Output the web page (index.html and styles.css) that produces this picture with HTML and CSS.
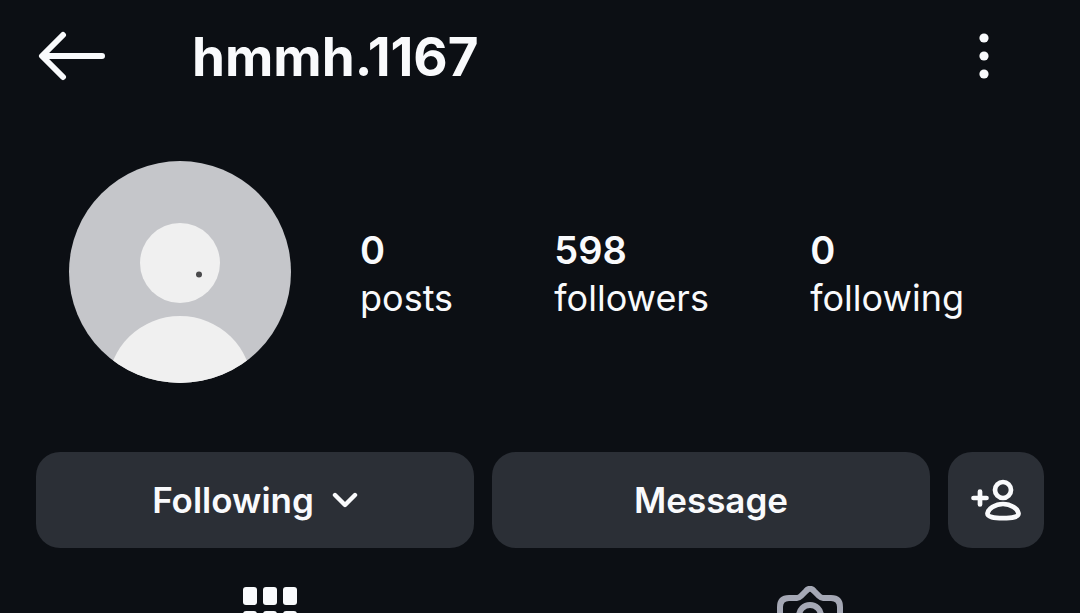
FILE: index.html
```html
<!DOCTYPE html>
<html lang="en">
<head>
<meta charset="utf-8">
<meta name="viewport" content="width=device-width, initial-scale=1">
<title>hmmh.1167</title>
<link rel="stylesheet" href="styles.css">
</head>
<body>
<header class="topbar">
  <button class="icon-button" type="button" aria-label="Back">
    <svg width="68" height="52" viewBox="0 0 68 52" fill="none" stroke="currentColor" stroke-width="6" stroke-linecap="round" stroke-linejoin="round"><path d="M25 5 4 26l21 21M5 26h59"/></svg>
  </button>
  <h1 class="username">hmmh.1167</h1>
  <button class="icon-button" type="button" aria-label="More options">
    <svg width="12" height="48" viewBox="0 0 12 48" fill="currentColor"><circle cx="6" cy="6" r="4.6"/><circle cx="6" cy="24" r="4.6"/><circle cx="6" cy="42" r="4.6"/></svg>
  </button>
</header>
<main>
  <section class="profile">
    <svg class="avatar" viewBox="0 0 222 222" role="img" aria-label="Profile photo">
      <clipPath id="round"><circle cx="111" cy="111" r="111"/></clipPath>
      <g clip-path="url(#round)">
        <rect width="222" height="222" fill="#c5c6ca"/>
        <circle cx="111" cy="102" r="40" fill="#f0f0f0"/>
        <ellipse cx="111" cy="226" rx="72" ry="71" fill="#f0f0f0"/>
        <circle cx="130" cy="113.500" r="3" fill="#4a4a4c"/>
      </g>
    </svg>
    <div class="stats">
      <a class="stat" href="#posts"><strong class="stat-value">0</strong><span>posts</span></a>
      <a class="stat" href="#followers"><strong class="stat-value">598</strong><span>followers</span></a>
      <a class="stat" href="#following"><strong class="stat-value">0</strong><span>following</span></a>
    </div>
  </section>
  <div class="actions">
    <button class="action" type="button">Following
      <svg width="26" height="16" viewBox="0 0 26 16" fill="none" stroke="currentColor" stroke-width="4.400" stroke-linecap="round" stroke-linejoin="round"><path d="m3 3 10 10L23 3"/></svg>
    </button>
    <button class="action" type="button">Message</button>
    <button class="action action-square" type="button" aria-label="Suggested people">
      <svg width="52" height="44" viewBox="0 0 52 44" fill="none" stroke="currentColor" stroke-width="4.700" stroke-linecap="round" stroke-linejoin="round"><circle cx="33" cy="12" r="8"/><path d="M3.500 20h13M10 13.500v13M33 26c-8 0-15 5-15.500 9.200-.4 3.800 6.500 5 15.500 5s15.900-1.200 15.500-5C48 31 41 26 33 26Z"/></svg>
    </button>
  </div>
  <nav class="tabs">
    <a class="tab tab-active" href="#grid" aria-label="Posts">
      <svg width="54" height="62" viewBox="0 -1 54 62" fill="currentColor"><g id="row"><rect width="14" height="18" rx="3"/><rect x="20" width="14" height="18" rx="3"/><rect x="40" width="14" height="18" rx="3"/></g><use href="#row" y="24"/></svg>
    </a>
    <a class="tab" href="#tagged" aria-label="Tagged">
      <svg width="66" height="62" viewBox="0 0 66 62" fill="none" stroke="currentColor" stroke-width="6" stroke-linejoin="round"><path d="M12 12h8c2 0 3-1 4-2l5-5c2.500-3 5.500-3 8 0l5 5c1 1 2 2 4 2h8q9 0 9 9v29q0 9-9 9H12q-9 0-9-9V21q0-9 9-9Z"/><circle cx="33" cy="30" r="11"/></svg>
    </a>
  </nav>
</main>
</body>
</html>
```
FILE: styles.css
```css
* { box-sizing: border-box; }

body {
  margin: 0;
  height: 100vh;
  overflow: hidden;
  background: #0c0f14;
  color: #f9fafc;
  font-family: Inter, "Liberation Sans", sans-serif;
  font-size: 36px;
}

svg { display: block; flex: none; }
a { color: inherit; text-decoration: none; }

.topbar {
  display: flex;
  align-items: center;
  height: 112px;
  padding: 0 90px 0 38px;
}

.icon-button {
  border: 0;
  padding: 0;
  background: none;
  color: inherit;
}

.username {
  flex: 1;
  margin: 0 0 0 86px;
  padding-top: 2px;
  font-size: 53px;
  font-weight: 700;
  line-height: 66px;
}

.profile {
  display: flex;
  align-items: center;
  padding: 49px 116px 69px 69px;
}

.avatar { width: 222px; height: 222px; }

.stats {
  display: flex;
  flex: 1;
  justify-content: space-between;
  margin-left: 69px;
  padding-top: 4px;
  line-height: 48px;
}

.stat { display: flex; flex-direction: column; }
.stat-value { font-size: 38px; font-weight: 600; }

.actions {
  display: flex;
  gap: 18px;
  padding: 0 36px;
}

.action {
  display: flex;
  flex: 1;
  align-items: center;
  justify-content: center;
  gap: 18px;
  height: 96px;
  padding: 0;
  border: 0;
  border-radius: 24px;
  background: #2b2f36;
  color: inherit;
  font: inherit;
  font-size: 35px;
  font-weight: 600;
}

.action-square { flex: 0 0 96px; }

.tabs {
  display: grid;
  grid-template-columns: 1fr 1fr;
  padding-top: 38px;
}

.tab { display: flex; justify-content: center; color: #a5a8b5; }
.tab-active { color: #f9fafc; }
```
